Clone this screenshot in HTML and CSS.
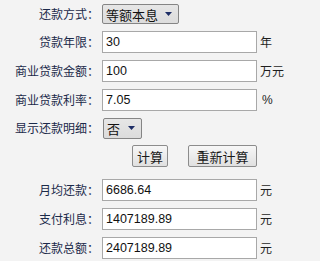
FILE: index.html
```html
<!DOCTYPE html>
<html lang="zh-CN">
<head>
<meta charset="utf-8">
<title>贷款计算器</title>
<link rel="stylesheet" href="styles.css">
</head>
<body>
<form class="calc">
  <label class="label">还款方式：</label>
  <div class="field">
    <div class="select select-wide"><span>等额本息</span><svg class="arrow" width="7" height="4" viewBox="0 0 7 4"><path d="M0 0H7L3.5 4Z"/></svg></div>
  </div>
  <span class="unit"></span>

  <label class="label">贷款年限：</label>
  <div class="field"><input class="input" type="text" value="30"></div>
  <span class="unit">年</span>

  <label class="label">商业贷款金额：</label>
  <div class="field"><input class="input" type="text" value="100"></div>
  <span class="unit">万元</span>

  <label class="label">商业贷款利率：</label>
  <div class="field"><input class="input" type="text" value="7.05"></div>
  <span class="unit unit-pct">%</span>

  <label class="label">显示还款明细：</label>
  <div class="field">
    <div class="select select-narrow"><span>否</span><svg class="arrow" width="7" height="4" viewBox="0 0 7 4"><path d="M0 0H7L3.5 4Z"/></svg></div>
  </div>
  <span class="unit"></span>

  <span class="label"></span>
  <div class="field buttons">
    <button type="button" class="btn btn-calc">计算</button>
    <button type="button" class="btn btn-reset">重新计算</button>
  </div>
  <span class="unit"></span>

  <label class="label">月均还款：</label>
  <div class="field"><input class="input" type="text" value="6686.64"></div>
  <span class="unit">元</span>

  <label class="label">支付利息：</label>
  <div class="field"><input class="input" type="text" value="1407189.89"></div>
  <span class="unit">元</span>

  <label class="label">还款总额：</label>
  <div class="field"><input class="input" type="text" value="2407189.89"></div>
  <span class="unit">元</span>
</form>
</body>
</html>
```

FILE: styles.css
```css
html, body {
  margin: 0;
  padding: 0;
  background: #f3f3f3;
}

body {
  font-family: "Noto Sans CJK SC", "Liberation Sans", sans-serif;
  font-size: 12px;
  color: #1b2a4a;
}

.calc {
  display: grid;
  grid-template-columns: 99px 155px auto;
  grid-template-rows: 20px 22px 22px 22px 20px 27px 22px 22px 22px;
  column-gap: 3px;
  row-gap: 7px;
  padding-top: 4px;
  align-items: center;
}

.label {
  text-align: right;
  white-space: nowrap;
  line-height: 1;
  color: #1b2a4a;
}

.field {
  display: flex;
  align-items: center;
  height: 100%;
}

.input {
  box-sizing: border-box;
  width: 155px;
  height: 22px;
  margin: 0;
  padding: 0 3px;
  border: 1px solid #a8a8a8;
  background: #ffffff;
  font-family: "Liberation Sans", Arial, sans-serif;
  font-size: 12.5px;
  color: #111111;
  outline: none;
}

.unit {
  font-size: 12px;
  color: #1e1e1e;
  line-height: 1;
}

.unit-pct {
  font-family: "Liberation Sans", Arial, sans-serif;
  margin-left: 2px;
}

.select {
  box-sizing: border-box;
  display: flex;
  align-items: center;
  justify-content: space-between;
  height: 20px;
  padding: 0 6px 0 3px;
  border: 1px solid #858585;
  border-radius: 2px;
  background: linear-gradient(#e6e6e6, #dcdcdc);
  font-size: 13px;
  color: #111111;
  line-height: 1;
}

.select-wide {
  width: 77px;
}

.select-narrow {
  width: 39px;
  height: 21px;
  margin-left: 1px;
}

.arrow {
  fill: #1d2d66;
  display: block;
}

.buttons {
  align-items: flex-start;
  gap: 20px;
  padding-left: 30px;
}

.btn {
  box-sizing: border-box;
  height: 22px;
  margin: 0;
  padding: 0;
  border: 1px solid #8c8c8c;
  border-radius: 2px;
  background: linear-gradient(#f7f7f7, #e0e0e0);
  font-family: "Noto Sans CJK SC", sans-serif;
  font-size: 13px;
  color: #1a1a1a;
  line-height: 1;
}

.btn-calc {
  width: 37px;
}

.btn-reset {
  width: 71px;
}
```
